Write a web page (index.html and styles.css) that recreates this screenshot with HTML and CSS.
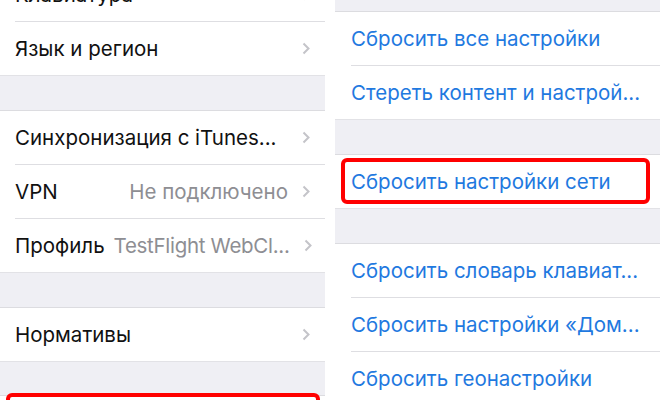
FILE: index.html
```html
<!DOCTYPE html>
<html lang="ru">
<head>
    <meta charset="UTF-8">
    <meta name="viewport" content="width=device-width, initial-scale=1.0">
    <title>Сброс настроек</title>
    <link rel="stylesheet" href="styles.css">
</head>
<body>

    <div class="shots">
        <div class="screen screen-left">
            <div class="group">
                <div class="row">
                    <span class="label">Клавиатура</span>
                    <svg class="chev" width="8" height="13" viewBox="0 0 8 13"><polyline points="1.5,1.5 6.5,6.5 1.5,11.5"/></svg>
                </div>
                <div class="row">
                    <span class="label">Язык и регион</span>
                    <svg class="chev" width="8" height="13" viewBox="0 0 8 13"><polyline points="1.5,1.5 6.5,6.5 1.5,11.5"/></svg>
                </div>
            </div>
            <div class="gap"></div>
            <div class="group">
                <div class="row">
                    <span class="label">Синхронизация с iTunes...</span>
                    <svg class="chev" width="8" height="13" viewBox="0 0 8 13"><polyline points="1.5,1.5 6.5,6.5 1.5,11.5"/></svg>
                </div>
                <div class="row">
                    <span class="label">VPN</span>
                    <span class="value">Не подключено</span>
                    <svg class="chev" width="8" height="13" viewBox="0 0 8 13"><polyline points="1.5,1.5 6.5,6.5 1.5,11.5"/></svg>
                </div>
                <div class="row">
                    <span class="label">Профиль</span>
                    <span class="value value-long">TestFlight WebCl...</span>
                    <svg class="chev" width="8" height="13" viewBox="0 0 8 13"><polyline points="1.5,1.5 6.5,6.5 1.5,11.5"/></svg>
                </div>
            </div>
            <div class="gap"></div>
            <div class="group">
                <div class="row">
                    <span class="label">Нормативы</span>
                    <svg class="chev" width="8" height="13" viewBox="0 0 8 13"><polyline points="1.5,1.5 6.5,6.5 1.5,11.5"/></svg>
                </div>
            </div>
            <div class="gap gap-last"></div>
            <div class="group">
                <div class="row">
                    <div class="mark mark-bottom"></div>
                </div>
            </div>
        </div>

        <div class="screen screen-right">
            <div class="gap gap-top"></div>
            <div class="group">
                <div class="row"><span class="action">Сбросить все настройки</span></div>
                <div class="row"><span class="action">Стереть контент и настрой...</span></div>
            </div>
            <div class="gap"></div>
            <div class="group">
                <div class="row">
                    <span class="action">Сбросить настройки сети</span>
                    <div class="mark"></div>
                </div>
            </div>
            <div class="gap"></div>
            <div class="group">
                <div class="row"><span class="action">Сбросить словарь клавиат...</span></div>
                <div class="row"><span class="action">Сбросить настройки «Дом...</span></div>
                <div class="row"><span class="action">Сбросить геонастройки</span></div>
            </div>
        </div>
    </div>

</body>
</html>
```

FILE: styles.css
```css
* {
    margin: 0; padding: 0;
    box-sizing: border-box;
}
body {
    background: white;
    font-family: 'Inter', 'Liberation Sans', sans-serif;
    width: 660px;
    height: 400px;
    overflow: hidden;
}
.shots {
    display: flex;
    align-items: flex-start;
    gap: 10px;
    height: 400px;
    overflow: hidden;
}
.screen {
    background: #efeff4;
    display: flex;
    flex-direction: column;
}
.screen > * {
    flex-shrink: 0;
}
.screen-left {
    width: 325px;
    margin-top: -32px;
}
.screen-right {
    flex: 1;
}
.gap {
    height: 36px;
    border-top: 1px solid #e2e2e6;
    border-bottom: 1px solid #dcdce0;
}
.gap-top {
    height: 12px;
    border-top: none;
}
.gap-last {
    height: 35px;
}
.group {
    background: white;
}
.row {
    position: relative;
    height: 53px;
    display: flex;
    align-items: center;
    margin-left: 15px;
    padding-right: 15px;
    font-size: 20.5px;
}
.screen-right .row {
    margin-left: 16px;
}
.row + .row {
    height: 54px;
    border-top: 1px solid #dedee2;
}
.label {
    color: #111;
    white-space: nowrap;
    flex: 1;
}
.value {
    color: #8e8e93;
    white-space: nowrap;
    margin-right: 14px;
    margin-left: 9px;
}
.value-long {
    letter-spacing: -0.3px;
}
.chev {
    flex: none;
    fill: none;
    stroke: #c4c4c9;
    stroke-width: 2;
}
.action {
    color: #1f79e0;
    white-space: nowrap;
}
.mark {
    position: absolute;
    left: -10px;
    right: 10px;
    top: 3px;
    bottom: 4px;
    border: 4px solid #f00;
    border-radius: 6px;
}
.mark-bottom {
    left: -9px;
    right: 5px;
    top: -3px;
    bottom: -10px;
}
```
